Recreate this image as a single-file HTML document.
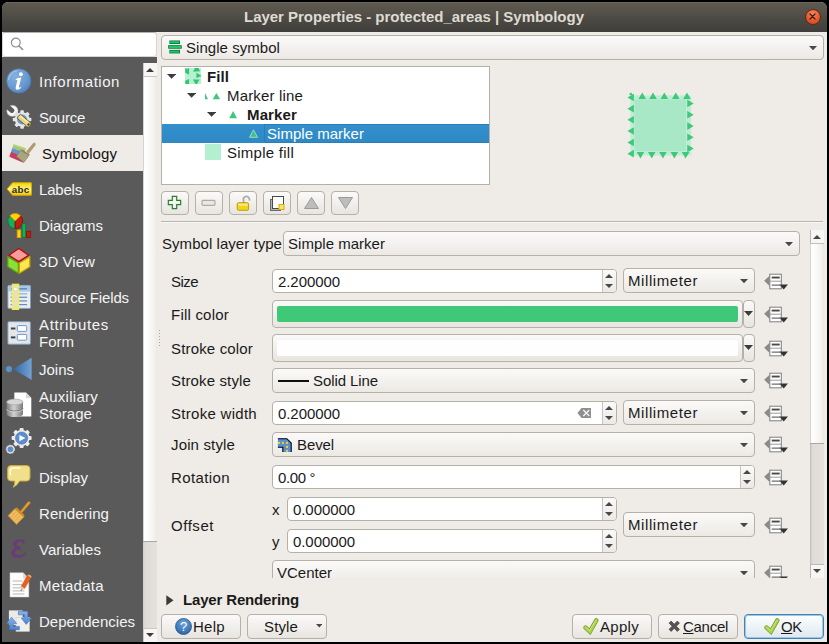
<!DOCTYPE html>
<html><head><meta charset="utf-8"><title>Layer Properties</title>
<style>
*{box-sizing:border-box;margin:0;padding:0}
html,body{width:829px;height:644px;overflow:hidden;background:#000}
body{font-family:"Liberation Sans",sans-serif;font-size:15px;color:#1a1a1a;position:relative}
div,svg{position:absolute}
.tx{white-space:nowrap;line-height:1.15}
#win{left:2px;top:2px;width:825px;height:640px;background:#efebe7;border-radius:7px 7px 0 0;overflow:hidden}
#title{left:2px;top:2px;width:825px;height:30px;background:linear-gradient(#5d594f 0%,#56524a 30%,#4a4843 60%,#403f3b 100%);border-radius:6px 6px 0 0;border-top:1px solid #6a665c}
#close{left:804.6px;top:8.6px;width:16.4px;height:16.4px;border-radius:50%;background:radial-gradient(circle at 50% 30%,#f58a63,#e2542a 60%,#cf4418);border:1px solid #5e2a17}
#search{left:2px;top:32px;width:155px;height:25px;background:#fff;border:1px solid #d9d6d1;border-top-color:#b5b1aa;border-radius:3px}
#side{left:2px;top:57px;width:141px;height:585px;background:#5a5a5a}
#sidetop{left:2px;top:57px;width:155px;height:6px;background:#5a5a5a}
#selrow{left:2px;top:135px;width:141px;height:36px;background:#efebe7}
#sscroll{left:143px;top:63px;width:14px;height:579px;background:#f7f6f4;border-left:1px solid #cfccc7}
#sthumb{left:143px;top:76px;width:14px;height:466px;background:linear-gradient(90deg,#c2bfba 0,#fff 1.5px,#fcfbfa 40%,#f1eeea 92%,#ebe8e4 100%);border-top:1px solid #c9c6c1;border-bottom:1px solid #aaa6a1}
#strack{left:143px;top:542px;width:14px;height:87px;background:linear-gradient(90deg,#cfccc8 0,#dedbd7 2px,#e5e2de 100%);border-bottom:1px solid #cbc8c3}
.combo{background:linear-gradient(#fbfaf9,#ece9e5);border:1px solid #b5b0a8;border-radius:4px}
.edit{background:#fff;border:1px solid #b5b0a8;border-radius:4px}
.spin{background:linear-gradient(#fbfaf9,#ece9e5);border-left:1px solid #c9c5be;border-radius:0 3px 3px 0}
.btn{background:linear-gradient(#fbfaf9,#e8e5e0);border:1px solid #b5b0a8;border-radius:4px}
.da{width:0;height:0;border-left:4px solid transparent;border-right:4px solid transparent;border-top:4.5px solid #3c3c3c}
.ua{width:0;height:0;border-left:4px solid transparent;border-right:4px solid transparent;border-bottom:4.5px solid #3c3c3c}
.sda{width:0;height:0;border-left:3.5px solid transparent;border-right:3.5px solid transparent;border-top:4px solid #3c3c3c}
.sua{width:0;height:0;border-left:3.5px solid transparent;border-right:3.5px solid transparent;border-bottom:4px solid #3c3c3c}
u{text-decoration:underline;text-underline-offset:1px}

</style></head><body>
<div id="win"></div>
<div id="title"></div><div id="close"></div>
<svg style="left:804.3px;top:8.300px" width="17" height="17" viewBox="0 0 17 17"><path d="M6 6 L11 11 M11 6 L6 11" stroke="#3a1a0c" stroke-width="1.2" stroke-linecap="round"/></svg>
<div id="search"></div>
<svg style="left:9px;top:36px" width="16" height="16" viewBox="0 0 16 16"><circle cx="6.8" cy="6.6" r="4.4" fill="none" stroke="#8e8e8e" stroke-width="1.2"/><path d="M10 10 L13.600 13.500" stroke="#8e8e8e" stroke-width="1.600" stroke-linecap="round"/></svg>
<div id="side"></div><div id="sidetop"></div><div id="selrow"></div>
<div id="sscroll"></div><div id="sthumb"></div><div id="strack"></div>
<svg style="left:146px;top:68px" width="8" height="4" viewBox="0 0 8 4"><polygon points="0,4 8,4 4.0,0" fill="#3c3c3c"/></svg>
<svg style="left:146px;top:633px" width="8" height="4" viewBox="0 0 8 4"><polygon points="0,0 8,0 4.0,4" fill="#3c3c3c"/></svg>
<!--ICONS_START-->
<svg style="left:2px;top:63px" width="36" height="36" viewBox="0 0 36 36"><defs><radialGradient id="ig" cx=".35" cy=".3" r=".8"><stop offset="0" stop-color="#86b0de"/><stop offset=".6" stop-color="#6a9bd2"/><stop offset="1" stop-color="#4f80bb"/></radialGradient></defs>
<circle cx="16.8" cy="17.9" r="12.2" fill="url(#ig)" stroke="#4a76ad" stroke-width=".8"/>
<path d="M6.5 17 A10.5 10.5 0 0 1 15 7.600" fill="none" stroke="#a9c9ea" stroke-width="1.2" opacity=".8"/>
<circle cx="18.9" cy="11.2" r="1.9" fill="#fff"/>
<path d="M13.6 16.2 Q16 14.2 19.200 14.400 L17 23.500 Q16.800 25 18.600 24.200 L19.600 23.600 Q18 27 14.800 26.800 Q13.200 26.400 13.700 24.200 L15.300 17.800 Q15.500 16.600 13.600 16.800 Z" fill="#fff"/></svg>
<svg style="left:2px;top:99px" width="36" height="36" viewBox="0 0 36 36"><g transform="translate(20.1,20.5)"><g fill="#e6e6e6">
<circle r="7.3"/>
<rect x="-1.800" y="-9.300" width="3.600" height="3.500" rx=".8"/><rect transform="rotate(45)" x="-1.800" y="-9.300" width="3.600" height="3.500" rx=".8"/><rect transform="rotate(90)" x="-1.800" y="-9.300" width="3.600" height="3.500" rx=".8"/><rect transform="rotate(135)" x="-1.800" y="-9.300" width="3.600" height="3.500" rx=".8"/><rect transform="rotate(180)" x="-1.800" y="-9.300" width="3.600" height="3.500" rx=".8"/><rect transform="rotate(225)" x="-1.800" y="-9.300" width="3.600" height="3.500" rx=".8"/><rect transform="rotate(270)" x="-1.800" y="-9.300" width="3.600" height="3.500" rx=".8"/><rect transform="rotate(315)" x="-1.800" y="-9.300" width="3.600" height="3.500" rx=".8"/></g>
<circle r="5" fill="#6a9bd2"/></g>
<g transform="translate(10.400,11.900) rotate(40)">
<circle r="5.700" fill="#f4f4f4" stroke="#8a8a8a" stroke-width=".4"/>
<path d="M-7 -2.400 H-0.500 A2.400 2.400 0 0 1 -0.500 2.400 H-7 Z" fill="#5a5a5a"/>
<rect x="4" y="-2.100" width="6" height="4.200" fill="#dedede"/>
<rect x="8" y="-2.600" width="15" height="5.200" rx="1.600" fill="#e9d577" stroke="#4a4432" stroke-width=".7"/>
<rect x="9" y="-1.900" width="10.500" height="1.500" fill="#f6ecae"/>
<circle cx="21" cy="0" r="1.200" fill="#3a3a3a"/></g></svg>
<svg style="left:2px;top:135px" width="36" height="36" viewBox="0 0 36 36"><polygon points="11.7,9.2 24,13.2 23,17.5 10.4,13" fill="#a9c86c"/><polygon points="10.4,13 23,17.5 22.1,21.4 9.1,16.5" fill="#5b9ad6"/><polygon points="9.1,16.5 22.1,21.4 20.7,27.4 7.3,21.8" fill="#c4405c"/>
<polygon points="11.7,9.2 24,13.2 23.700,14.400 11.300,10.300" fill="#c2d98e"/>
<path d="M24.600 16.600 L31.400 8.300 Q32.600 7.600 33.200 8.600 Q33.600 9.400 33 10.200 L26.700 18.600 Z" fill="#b39b6b" stroke="#8d7a4e" stroke-width=".4"/>
<path d="M14.400 21.200 L18.600 15.200 L26.900 20.600 L21.700 27.600 Z" fill="#a8a27e" stroke="#7f7856" stroke-width=".6"/>
<path d="M18.600 15.200 L20 14.600 L27.800 19.600 L26.900 20.600 Z" fill="#8f8258"/>
<path d="M16 21 L20 15.900 M18 22.400 L22 17.300 M20 23.800 L24 18.700 M22 25.200 L25.800 20" stroke="#c4c0a2" stroke-width=".5" stroke-dasharray=".8 .8"/></svg>
<svg style="left:2px;top:171px" width="36" height="36" viewBox="0 0 36 36"><defs><linearGradient id="lg" x1="0" y1="0" x2="0" y2="1"><stop offset="0" stop-color="#f3d500"/><stop offset=".5" stop-color="#fff27c"/><stop offset="1" stop-color="#f0c800"/></linearGradient></defs>
<path d="M5 18 L10.600 11.700 H28.900 Q29.500 11.700 29.500 12.300 V23.700 Q29.500 24.300 28.900 24.300 H10.600 Z" fill="url(#lg)" stroke="#d4ac00" stroke-width="1"/>
<text x="18.700" y="21.700" font-family="Liberation Sans" font-weight="bold" font-size="9.800" fill="#2b2b2b" text-anchor="middle" letter-spacing=".3">abc</text></svg>
<svg style="left:2px;top:207px" width="36" height="36" viewBox="0 0 36 36"><g stroke-width=".9">
<path d="M13.200 14 L7.900 8.700 A7.500 7.500 0 0 0 13.200 21.500 Z" fill="#12b05a" stroke="#0a7038"/>
<path d="M13.200 14 L18.500 8.700 A7.500 7.500 0 0 1 13.200 21.500 Z" fill="#c41c10" stroke="#7c0e08"/>
<path d="M13.200 14 L7.900 8.700 A7.500 7.500 0 0 1 18.500 8.700 Z" fill="#ffd30a" stroke="#d89c00"/>
<rect x="15.200" y="23" width="3.600" height="7.600" fill="#ffd30a" stroke="#e0a000"/>
<rect x="20.100" y="16.400" width="3.600" height="14" fill="#12b05a" stroke="#0a7a3a"/>
<rect x="24.600" y="24.300" width="4" height="6.100" fill="#c41c10" stroke="#8a140a"/></g></svg>
<svg style="left:2px;top:243px" width="36" height="36" viewBox="0 0 36 36"><g stroke-width="1.300" stroke-linejoin="round">
<path d="M16.800 5.500 L26.600 12.300 L16.800 18.600 L7 12.300 Z" fill="#f79c9c" stroke="#c00808"/>
<path d="M5.800 13.600 L16.400 20 L16.400 30.200 L5.800 23.800 Z" fill="#8be03a" stroke="#5aa012"/>
<path d="M17.400 20 L27.800 13.600 L27.800 23.800 L17.400 30.200 Z" fill="#fbe84e" stroke="#c8a408"/></g></svg>
<svg style="left:2px;top:279px" width="36" height="36" viewBox="0 0 36 36"><rect x="5.900" y="6.400" width="22.600" height="23" rx="1" fill="#ececec" stroke="#7ba0cc" stroke-width=".9"/>
<rect x="6.300" y="6.800" width="21.800" height="5.800" fill="#a9c8e8"/>
<rect x="9" y="9" width="16" height="1.500" fill="#5a8fcb"/>
<g fill="#4a86c6"><rect x="8.600" y="14.200" width="16.500" height="1.300" opacity=".55"/><rect x="8.600" y="17.700" width="16.500" height="1.100"/><rect x="8.600" y="21.400" width="16.500" height="1.100"/><rect x="8.600" y="25.100" width="16.500" height="1.100"/></g>
<rect x="10.300" y="5.200" width="6.400" height="25.200" fill="#e9e0b4" stroke="#f8f432" stroke-width="1.100"/>
<rect x="12.500" y="9" width="2" height="2" fill="#fff"/></svg>
<svg style="left:2px;top:315px" width="36" height="36" viewBox="0 0 36 36"><rect x="5.900" y="6.700" width="22.500" height="22.500" rx="1" fill="#e6e6e6" stroke="#7ba0cc" stroke-width=".9"/>
<rect x="15.300" y="10.600" width="9.400" height="5.800" rx=".8" fill="#fdfdff" stroke="#5a8fd0" stroke-width=".9"/>
<rect x="15.300" y="19.400" width="9.400" height="5.800" rx=".8" fill="#fdfdff" stroke="#5a8fd0" stroke-width=".9"/>
<rect x="8.900" y="12.500" width="4.500" height="2" fill="#33475c"/><rect x="8.900" y="21.400" width="4.500" height="2" fill="#33475c"/></svg>
<svg style="left:2px;top:351px" width="36" height="36" viewBox="0 0 36 36"><defs><linearGradient id="jg" x1="0" y1="0" x2="1" y2="0"><stop offset="0" stop-color="#2f69a6"/><stop offset="1" stop-color="#74a2d4"/></linearGradient></defs>
<polygon points="11.400,17.900 29.600,6.800 29.600,28.900" fill="url(#jg)"/><circle cx="7" cy="18.100" r="3.100" fill="#5b8fc8"/></svg>
<svg style="left:2px;top:387px" width="36" height="36" viewBox="0 0 36 36"><defs><linearGradient id="cg" x1="0" y1="0" x2="1" y2="0"><stop offset="0" stop-color="#7d7d7d"/><stop offset=".45" stop-color="#d2d2d2"/><stop offset="1" stop-color="#7a7a7a"/></linearGradient></defs>
<path d="M12.300 5.600 H24 L29.300 11 V29.400 H12.300 Z" fill="#fff"/><path d="M24 5.600 V11 H29.300 Z" fill="#d8d8d8"/>
<path d="M4.600 15 V27.200 A8.200 2.900 0 0 0 21 27.200 V15 Z" fill="url(#cg)"/>
<path d="M4.600 21.200 A8.200 2.900 0 0 0 21 21.200" fill="none" stroke="#666" stroke-width=".8"/>
<path d="M4.600 22 A8.200 2.900 0 0 0 21 22" fill="none" stroke="#e8e8e8" stroke-width=".6"/>
<ellipse cx="12.800" cy="15" rx="8.200" ry="2.900" fill="#d6d6d6" stroke="#9a9a9a" stroke-width=".6"/></svg>
<svg style="left:2px;top:423px" width="36" height="36" viewBox="0 0 36 36"><g transform="translate(19.600,15.100)"><g fill="#ececec"><circle r="8"/>
<rect x="-2" y="-10" width="4" height="3.500" rx="1"/><rect transform="rotate(45)" x="-2" y="-10" width="4" height="3.500" rx="1"/><rect transform="rotate(90)" x="-2" y="-10" width="4" height="3.500" rx="1"/><rect transform="rotate(135)" x="-2" y="-10" width="4" height="3.500" rx="1"/><rect transform="rotate(180)" x="-2" y="-10" width="4" height="3.500" rx="1"/><rect transform="rotate(225)" x="-2" y="-10" width="4" height="3.500" rx="1"/><rect transform="rotate(270)" x="-2" y="-10" width="4" height="3.500" rx="1"/><rect transform="rotate(315)" x="-2" y="-10" width="4" height="3.500" rx="1"/></g>
<circle r="6.100" fill="#5b8fcf" stroke="#3f6fa8" stroke-width=".6"/><polygon points="-2.200,-3.200 3.800,0 -2.200,3.200" fill="#fff"/></g>
<g transform="translate(8.400,26.300)"><circle r="4.200" fill="#e4e4e4" stroke="#cfcfcf" stroke-width="1" stroke-dasharray="1.600 1.400"/><circle r="2.900" fill="#5b8fcf"/></g></svg>
<svg style="left:2px;top:459px" width="36" height="36" viewBox="0 0 36 36"><path d="M9 6.600 H24.600 Q28 6.600 28 10 V18.600 Q28 22 24.600 22 H17.600 Q15.500 26.300 11.200 28.300 Q13.300 25 12.800 22 H9 Q5.600 22 5.600 18.600 V10 Q5.600 6.600 9 6.600 Z" fill="#f0e08c" stroke="#c9ae3c" stroke-width="1"/>
<path d="M8.300 16 V11.800 Q8.300 9 11.300 9 H18" fill="none" stroke="#fffbe4" stroke-width="1.300" stroke-linecap="round"/></svg>
<svg style="left:2px;top:495px" width="36" height="36" viewBox="0 0 36 36"><path d="M18.300 16.400 L25.800 7 Q27.200 6 28 7 Q28.600 8 27.600 9 L19.800 17.900 Z" fill="#e3a030" stroke="#c07c14" stroke-width=".5"/>
<path d="M6.100 20.700 L12.900 13.500 L22 22 L14.500 29.500 Z" fill="#eab455" stroke="#c88a20" stroke-width=".7"/>
<path d="M12.900 13.500 L15 12.600 L22.600 20.200 L22 22 Z" fill="#d48c1c"/>
<path d="M8 21 L13 16 M10 23 L15.500 17.500 M12 25 L18 19 M14 27 L20 21" stroke="#f8d898" stroke-width=".7" stroke-dasharray="1 1"/></svg>
<svg style="left:2px;top:531px" width="36" height="36" viewBox="0 0 36 36"><path d="M22.300 11.600 Q22.800 9.600 20.600 8.900 Q17.600 8 14.800 9.100 Q11.300 10.600 11.600 13.600 Q12 16.600 16.400 17 Q9.600 17.600 9.500 22.200 Q9.600 26.500 15.600 26.400 Q20.400 26.300 23.300 23.500 Q24.300 22.300 23.500 21.400 Q20.400 24.800 16.400 24.700 Q12.600 24.500 12.500 21.600 Q12.600 18.300 18.400 17.900 L18.400 16.300 Q14.300 16.200 14.200 13.400 Q14.300 10.200 17.800 10.100 Q20.300 10.100 20.800 12 Q21.600 12.800 22.300 11.600 Z" fill="#6c3a78" stroke="#6c3a78" stroke-width=".7" stroke-linejoin="round"/></svg>
<svg style="left:2px;top:567px" width="36" height="36" viewBox="0 0 36 36"><path d="M8 5.800 H21.200 L26.800 11.400 V30 H8 Z" fill="#fdfdfd" stroke="#d0d0d0" stroke-width=".5"/><path d="M21.200 5.800 V11.400 H26.800 Z" fill="#d6d6d6"/>
<g fill="#c4c4c4"><rect x="10.600" y="13.400" width="10" height="1.200"/><rect x="10.600" y="17" width="11.800" height="1.200"/><rect x="10.600" y="20.200" width="9" height="1.200"/><rect x="10.600" y="23.300" width="11.800" height="1.200"/><rect x="10.600" y="26.400" width="11.800" height="1.200"/></g>
<path d="M25.300 8.600 L29 11 L22.600 21.600 L19.200 19.300 Z" fill="#e8601c" stroke="#b8440c" stroke-width=".4"/><path d="M25.300 8.600 L26.300 7.400 Q28.500 7.300 29.600 9.600 L29 11 Z" fill="#f0a070"/>
<path d="M19.200 19.300 L22.600 21.600 L18.600 24 Z" fill="#d8c8a8"/><path d="M19 22.600 L20 23.200 L18.600 24 Z" fill="#444"/></svg>
<svg style="left:2px;top:603px" width="36" height="36" viewBox="0 0 36 36"><defs><linearGradient id="dg" x1="0" y1="0" x2="0" y2="1"><stop offset="0" stop-color="#8ab4ea"/><stop offset="1" stop-color="#4a82d0"/></linearGradient></defs>
<rect x="6.900" y="7.400" width="13.800" height="14.700" fill="#eaeae6"/>
<rect x="14" y="14.300" width="13.400" height="14" fill="#efefec" stroke="#d2d2cc" stroke-width=".6"/>
<path d="M16.400 8.300 H25.800 V15 H29.600 L24.200 21.400 L19.300 15 H22.300 V11.800 H16.400 Z" fill="url(#dg)" stroke="#3f74c0" stroke-width=".6"/>
<path d="M17.400 26.800 H7.600 V20.600 H4.400 L9.600 14.200 L14.600 20.600 H11.400 V23.400 H17.400 Z" fill="url(#dg)" stroke="#3f74c0" stroke-width=".6"/></svg>
<!--ICONS_END-->
<div class="combo" style="left:161px;top:35px;width:663px;height:25px"></div>
<svg style="left:809.0px;top:46.0px" width="8" height="4.3" viewBox="0 0 8 4.3"><polygon points="0,0 8,0 4.0,4.3" fill="#484848"/></svg>
<svg style="left:168px;top:40px" width="15" height="14" viewBox="0 0 15 14"><rect x="1.4" y="0.5" width="10.6" height="3.5" fill="#0b6b35"/><rect x="2.0999999999999996" y="1.2" width="9.2" height="2.1" fill="#18c862"/><rect x="0.2" y="5.2" width="13.5" height="3.5" fill="#0b6b35"/><rect x="0.8999999999999999" y="5.9" width="12.1" height="2.1" fill="#18c862"/><rect x="1.4" y="9.9" width="10.6" height="3.5" fill="#0b6b35"/><rect x="2.0999999999999996" y="10.6" width="9.2" height="2.1" fill="#18c862"/></svg>
<div style="left:161px;top:66px;width:329px;height:119px;background:#fff;border:1px solid #b5b0a8"></div>
<div style="left:162px;top:124px;width:327px;height:19px;background:linear-gradient(#3290cc,#2e89c4)"></div>
<div style="left:264px;top:124px;width:225px;height:19px;border:1px solid #2a7db9;border-right:0"></div>
<svg style="left:167px;top:74.3px" width="9.2" height="4.8" viewBox="0 0 9.2 4.8"><polygon points="0,0 9.2,0 4.6,4.8" fill="#3c3c3c"/></svg>
<svg style="left:187px;top:93.3px" width="9.2" height="4.8" viewBox="0 0 9.2 4.8"><polygon points="0,0 9.2,0 4.6,4.8" fill="#3c3c3c"/></svg>
<svg style="left:206.7px;top:112.3px" width="9.2" height="4.8" viewBox="0 0 9.2 4.8"><polygon points="0,0 9.2,0 4.6,4.8" fill="#3c3c3c"/></svg>
<svg style="left:185px;top:68px" width="16" height="16" viewBox="0 0 16 16"><rect width="16" height="16" fill="#b6f0d2"/><g fill="#36c56e"><polygon points="0.200,0.200 1.200,0.200 2.200,1.200 3.200,0.200 4.100,0.200 4.100,6.700 0.200,4.800"/><polygon points="8.200,3.800 15,3.300 13.400,0.100 9.800,0.100"/><polygon points="11.400,4.700 16,7.600 16,8.200 11.400,9.900"/><polygon points="0.200,12.800 4.100,11 4.100,16 0.200,16"/><polygon points="8,11.400 14.500,11.400 12,16 10.400,16"/></g></svg>
<svg style="left:205px;top:92px" width="16" height="8" viewBox="0 0 16 8"><g fill="#3ec878"><polygon points="0,0.900 0,7.200 3,7.200"/><polygon points="7.700,7.200 15.100,7.200 11.400,0.900"/></g></svg>
<svg style="left:229px;top:110px" width="9" height="9" viewBox="0 0 9 9"><polygon points="0.200,8.200 8,8.200 4.100,1" fill="#3ec878"/></svg>
<svg style="left:248px;top:128px" width="11" height="11" viewBox="0 0 11 11"><polygon points="1.500,9.300 9.500,9.300 5.500,1.800" fill="#3ec18a" stroke="#9ed4cc" stroke-width="1"/></svg>
<div style="left:205px;top:144px;width:16px;height:16px;background:#b3f0d0"></div>
<svg style="left:615px;top:80px" width="90" height="90" viewBox="0 0 90 90"><rect x="15.37" y="15.37" width="60.79" height="60.09" fill="#bdeed5"/><rect x="19.56" y="19.56" width="51.43" height="51.43" fill="#a9e8c6"/><g fill="#3ec878"><polygon points="23.48,19.01 31.02,19.01 27.25,12.58"/><polygon points="34.24,19.01 41.78,19.01 38.01,12.58"/><polygon points="45.56,19.01 53.10,19.01 49.33,12.58"/><polygon points="57.02,19.01 64.56,19.01 60.79,12.58"/><polygon points="68.19,19.01 75.74,19.01 71.97,12.58"/><polygon points="72.25,19.70 72.25,27.25 78.68,23.48"/><polygon points="72.25,30.88 72.25,38.43 78.68,34.66"/><polygon points="72.25,42.34 72.25,49.89 78.68,46.12"/><polygon points="72.25,53.52 72.25,61.07 78.68,57.29"/><polygon points="72.25,64.70 72.25,72.25 78.68,68.47"/><polygon points="21.66,71.97 29.21,71.97 25.43,78.40"/><polygon points="32.98,71.97 40.53,71.97 36.75,78.40"/><polygon points="44.16,71.97 51.70,71.97 47.93,78.40"/><polygon points="55.62,71.97 63.16,71.97 59.39,78.40"/><polygon points="66.80,71.97 74.34,71.97 70.57,78.40"/><polygon points="18.87,13.69 18.87,21.24 12.44,17.47"/><polygon points="18.87,24.87 18.87,32.42 12.44,28.65"/><polygon points="18.87,36.05 18.87,43.60 12.44,39.83"/><polygon points="18.87,47.23 18.87,54.78 12.44,51.01"/><polygon points="18.87,58.69 18.87,66.24 12.44,62.47"/><polygon points="18.87,69.87 18.87,77.42 12.44,73.64"/><polygon points="13.97,15.09 17.89,15.09 15.93,12.30"/></g></svg>
<div class="btn" style="left:161px;top:191px;width:28px;height:24px"></div>
<div class="btn" style="left:195px;top:191px;width:28px;height:24px"></div>
<div class="btn" style="left:229px;top:191px;width:28px;height:24px"></div>
<div class="btn" style="left:263px;top:191px;width:28px;height:24px"></div>
<div class="btn" style="left:297px;top:191px;width:28px;height:24px"></div>
<div class="btn" style="left:331px;top:191px;width:28px;height:24px"></div>
<svg style="left:167.300px;top:195px" width="15" height="15" viewBox="0 0 17 17"><path d="M6 1.500h5v4.500h4.500v5h-4.500v4.500h-5v-4.500h-4.500v-5h4.500z" fill="#e6f3e2" stroke="#2f7d32" stroke-width="1.350"/><path d="M7.700 3.200h1.600v4.500h4.500v1.600h-4.500v4.500h-1.600v-4.500h-4.500v-1.600h4.500z" fill="#fff" opacity=".7"/></svg>
<svg style="left:201px;top:199px" width="15" height="8" viewBox="0 0 15 8"><rect x="1" y="1.300" width="13" height="5" rx="1" fill="#e9e7e3" stroke="#aeaaa4" stroke-width="1.200"/></svg>
<svg style="left:234px;top:193px" width="19" height="20" viewBox="0 0 19 20"><path d="M9.600 10 V7 a3 3.200 0 0 1 6 -0.600 V8.200" fill="none" stroke="#aaa" stroke-width="1.700" transform="rotate(-8 12 8)"/><rect x="3.200" y="9.700" width="11.400" height="7.600" rx="1.500" fill="#f1d41c" stroke="#b89400" stroke-width=".9"/><rect x="4.200" y="10.600" width="9.400" height="2.200" fill="#f9ea7a"/></svg>
<svg style="left:268px;top:194px" width="19" height="19" viewBox="0 0 19 19"><rect x="2.500" y="5.500" width="10" height="11" fill="#b4b4b0" stroke="#6a6a66"/><rect x="4.500" y="2.500" width="11" height="12" fill="#fdfdfd" stroke="#4a4a4a"/><rect x="11" y="10.500" width="5" height="5" fill="#f7e27a" stroke="#d4b000"/></svg>
<svg style="left:302px;top:196px" width="19" height="14" viewBox="0 0 19 14"><polygon points="2.500,12.500 16.500,12.500 9.500,1.500" fill="#bdbdbd" stroke="#9a9a9a"/></svg>
<svg style="left:336px;top:196px" width="19" height="14" viewBox="0 0 19 14"><polygon points="2.500,1.500 16.500,1.500 9.500,12.500" fill="#bdbdbd" stroke="#9a9a9a"/></svg>
<div style="left:161px;top:221px;width:662px;height:1px;background:#b9b5ae"></div>
<div style="left:161px;top:222px;width:662px;height:1px;background:#faf9f8"></div>
<div style="left:810px;top:230px;width:14px;height:348px;background:#f7f6f4;border-left:1px solid #bcb8b3"></div>
<div style="left:810px;top:243px;width:14px;height:201px;background:linear-gradient(90deg,#c4c1bc 0,#fff 1.5px,#fcfbfa 40%,#f0ede9 92%,#e8e5e1 100%);border-top:1px solid #c4c1bc;border-bottom:1px solid #aaa6a1"></div>
<div style="left:810px;top:444px;width:14px;height:121px;background:linear-gradient(90deg,#bcb8b3 0,#dedbd7 2px,#e5e2de 100%);border-bottom:1px solid #bcb8b3"></div>
<svg style="left:813px;top:235px" width="8" height="4" viewBox="0 0 8 4"><polygon points="0,4 8,4 4.0,0" fill="#484848"/></svg>
<svg style="left:813px;top:569.3px" width="8" height="4" viewBox="0 0 8 4"><polygon points="0,0 8,0 4.0,4" fill="#484848"/></svg>
<div class="combo" style="left:283px;top:231px;width:517px;height:25px"></div>
<svg style="left:785.0px;top:242.0px" width="8" height="4.3" viewBox="0 0 8 4.3"><polygon points="0,0 8,0 4.0,4.3" fill="#484848"/></svg>
<div class="edit" style="left:272px;top:269px;width:345px;height:24px"></div>
<div class="spin" style="left:602px;top:270px;width:14px;height:22px"></div>
<svg style="left:605.0px;top:273.8px" width="8" height="4" viewBox="0 0 8 4"><polygon points="0,4 8,4 4.0,0" fill="#484848"/></svg>
<svg style="left:605.0px;top:284.0px" width="8" height="4" viewBox="0 0 8 4"><polygon points="0,0 8,0 4.0,4" fill="#484848"/></svg>
<div class="combo" style="left:623px;top:268px;width:132px;height:25px"></div>
<svg style="left:740.0px;top:279.0px" width="8" height="4.3" viewBox="0 0 8 4.3"><polygon points="0,0 8,0 4.0,4.3" fill="#484848"/></svg>
<div class="btn" style="left:272px;top:300px;width:471px;height:28px"></div>
<div style="left:277px;top:306px;width:461px;height:16px;border-radius:3px;background:#3ec878;border-radius:2px"></div>
<div class="btn" style="left:743px;top:300px;width:12px;height:28px;border-radius:4px"></div>
<svg style="left:744px;top:311px" width="9" height="5" viewBox="0 0 9 5"><polygon points="0,0 9,0 4.5,5" fill="#3c3c3c"/></svg>
<div class="btn" style="left:272px;top:334px;width:471px;height:28px"></div>
<div style="left:277px;top:340px;width:461px;height:16px;border-radius:3px;background:#fefefe;border-radius:2px"></div>
<div class="btn" style="left:743px;top:334px;width:12px;height:28px;border-radius:4px"></div>
<svg style="left:744px;top:345px" width="9" height="5" viewBox="0 0 9 5"><polygon points="0,0 9,0 4.5,5" fill="#3c3c3c"/></svg>
<div class="combo" style="left:272px;top:368px;width:483px;height:25px"></div>
<svg style="left:740.0px;top:379.0px" width="8" height="4.3" viewBox="0 0 8 4.3"><polygon points="0,0 8,0 4.0,4.3" fill="#484848"/></svg>
<div style="left:278px;top:380px;width:31px;height:1.5px;background:#111"></div>
<div class="edit" style="left:272px;top:401px;width:345px;height:24px"></div>
<div class="spin" style="left:602px;top:402px;width:14px;height:22px"></div>
<svg style="left:605.0px;top:405.8px" width="8" height="4" viewBox="0 0 8 4"><polygon points="0,4 8,4 4.0,0" fill="#484848"/></svg>
<svg style="left:605.0px;top:416.0px" width="8" height="4" viewBox="0 0 8 4"><polygon points="0,0 8,0 4.0,4" fill="#484848"/></svg>
<div class="combo" style="left:623px;top:400px;width:132px;height:25px"></div>
<svg style="left:740.0px;top:411.0px" width="8" height="4.3" viewBox="0 0 8 4.3"><polygon points="0,0 8,0 4.0,4.3" fill="#484848"/></svg>
<svg style="left:577px;top:407px" width="15" height="12" viewBox="0 0 15 12"><path d="M0.500 6 L4.500 1 H14 V11 H4.500 Z" fill="#8f8f8f"/><path d="M6.300 3 L12.300 9 M12.300 3 L6.300 9" stroke="#fff" stroke-width="1.100"/></svg>
<div class="combo" style="left:272px;top:432px;width:483px;height:25px"></div>
<svg style="left:740.0px;top:443.0px" width="8" height="4.3" viewBox="0 0 8 4.3"><polygon points="0,0 8,0 4.0,4.3" fill="#484848"/></svg>
<svg style="left:277px;top:437px" width="16" height="16" viewBox="0 0 16 16"><path d="M0.900 1.600 L9.900 1.600 L14.400 6 L14.400 14.900 L5.600 14.900 L5.600 10.400 L0.900 10.400 Z" fill="#5b8fd0"/><path d="M0.900 1.700 L9.800 1.700 L14.200 6.100 L14.200 14.900 M0.900 10.200 L5.800 10.200 L5.800 14.900" fill="none" stroke="#0a0a0a" stroke-width="1.100"/><g fill="#f5d21c"><rect x="1" y="4.900" width="2" height="2"/><rect x="4.900" y="4.900" width="2" height="2"/><rect x="9" y="4.900" width="2" height="2"/><rect x="9" y="8.900" width="2" height="2"/><rect x="9" y="12.900" width="2" height="1.900"/></g></svg>
<div class="edit" style="left:272px;top:465px;width:483px;height:24px"></div>
<div class="spin" style="left:740px;top:466px;width:14px;height:22px"></div>
<svg style="left:743.0px;top:469.8px" width="8" height="4" viewBox="0 0 8 4"><polygon points="0,4 8,4 4.0,0" fill="#484848"/></svg>
<svg style="left:743.0px;top:480.0px" width="8" height="4" viewBox="0 0 8 4"><polygon points="0,0 8,0 4.0,4" fill="#484848"/></svg>
<div class="edit" style="left:287px;top:497px;width:330px;height:24px"></div>
<div class="spin" style="left:602px;top:498px;width:14px;height:22px"></div>
<svg style="left:605.0px;top:501.8px" width="8" height="4" viewBox="0 0 8 4"><polygon points="0,4 8,4 4.0,0" fill="#484848"/></svg>
<svg style="left:605.0px;top:512.0px" width="8" height="4" viewBox="0 0 8 4"><polygon points="0,0 8,0 4.0,4" fill="#484848"/></svg>
<div class="edit" style="left:287px;top:529px;width:330px;height:24px"></div>
<div class="spin" style="left:602px;top:530px;width:14px;height:22px"></div>
<svg style="left:605.0px;top:533.8px" width="8" height="4" viewBox="0 0 8 4"><polygon points="0,4 8,4 4.0,0" fill="#484848"/></svg>
<svg style="left:605.0px;top:544.0px" width="8" height="4" viewBox="0 0 8 4"><polygon points="0,0 8,0 4.0,4" fill="#484848"/></svg>
<div class="combo" style="left:623px;top:512px;width:132px;height:25px"></div>
<svg style="left:740.0px;top:523.0px" width="8" height="4.3" viewBox="0 0 8 4.3"><polygon points="0,0 8,0 4.0,4.3" fill="#484848"/></svg>
<div style="left:161px;top:555px;width:649px;height:22.800px;overflow:hidden"><div class="combo" style="left:111px;top:5px;width:483px;height:25px"></div><svg style="left:579.0px;top:16.0px" width="8" height="4.3" viewBox="0 0 8 4.3"><polygon points="0,0 8,0 4.0,4.3" fill="#484848"/></svg></div>
<svg style="left:764px;top:272.5px" width="25" height="17" viewBox="0 0 25 17"><polygon points="0.1,7.8 5.6,2.7 5.6,13" fill="#8a8a8a"/><rect x="5.8" y="1.2" width="11.5" height="14.6" fill="#fff" stroke="#7d7d7d"/><line x1="5.8" y1="8.2" x2="17.3" y2="8.2" stroke="#9a9a9a"/><rect x="7.7" y="3.6" width="8" height="1.9" fill="#4a4a4a"/><rect x="7.7" y="11.6" width="8.3" height="1" fill="#4a4a4a"/><polygon points="15.4,11.4 24,11.4 19.7,16.4" fill="#333"/></svg>
<svg style="left:764px;top:305.5px" width="25" height="17" viewBox="0 0 25 17"><polygon points="0.1,7.8 5.6,2.7 5.6,13" fill="#8a8a8a"/><rect x="5.8" y="1.2" width="11.5" height="14.6" fill="#fff" stroke="#7d7d7d"/><line x1="5.8" y1="8.2" x2="17.3" y2="8.2" stroke="#9a9a9a"/><rect x="7.7" y="3.6" width="8" height="1.9" fill="#4a4a4a"/><rect x="7.7" y="11.6" width="8.3" height="1" fill="#4a4a4a"/><polygon points="15.4,11.4 24,11.4 19.7,16.4" fill="#333"/></svg>
<svg style="left:764px;top:339.5px" width="25" height="17" viewBox="0 0 25 17"><polygon points="0.1,7.8 5.6,2.7 5.6,13" fill="#8a8a8a"/><rect x="5.8" y="1.2" width="11.5" height="14.6" fill="#fff" stroke="#7d7d7d"/><line x1="5.8" y1="8.2" x2="17.3" y2="8.2" stroke="#9a9a9a"/><rect x="7.7" y="3.6" width="8" height="1.9" fill="#4a4a4a"/><rect x="7.7" y="11.6" width="8.3" height="1" fill="#4a4a4a"/><polygon points="15.4,11.4 24,11.4 19.7,16.4" fill="#333"/></svg>
<svg style="left:764px;top:371.5px" width="25" height="17" viewBox="0 0 25 17"><polygon points="0.1,7.8 5.6,2.7 5.6,13" fill="#8a8a8a"/><rect x="5.8" y="1.2" width="11.5" height="14.6" fill="#fff" stroke="#7d7d7d"/><line x1="5.8" y1="8.2" x2="17.3" y2="8.2" stroke="#9a9a9a"/><rect x="7.7" y="3.6" width="8" height="1.9" fill="#4a4a4a"/><rect x="7.7" y="11.6" width="8.3" height="1" fill="#4a4a4a"/><polygon points="15.4,11.4 24,11.4 19.7,16.4" fill="#333"/></svg>
<svg style="left:764px;top:404.5px" width="25" height="17" viewBox="0 0 25 17"><polygon points="0.1,7.8 5.6,2.7 5.6,13" fill="#8a8a8a"/><rect x="5.8" y="1.2" width="11.5" height="14.6" fill="#fff" stroke="#7d7d7d"/><line x1="5.8" y1="8.2" x2="17.3" y2="8.2" stroke="#9a9a9a"/><rect x="7.7" y="3.6" width="8" height="1.9" fill="#4a4a4a"/><rect x="7.7" y="11.6" width="8.3" height="1" fill="#4a4a4a"/><polygon points="15.4,11.4 24,11.4 19.7,16.4" fill="#333"/></svg>
<svg style="left:764px;top:435.5px" width="25" height="17" viewBox="0 0 25 17"><polygon points="0.1,7.8 5.6,2.7 5.6,13" fill="#8a8a8a"/><rect x="5.8" y="1.2" width="11.5" height="14.6" fill="#fff" stroke="#7d7d7d"/><line x1="5.8" y1="8.2" x2="17.3" y2="8.2" stroke="#9a9a9a"/><rect x="7.7" y="3.6" width="8" height="1.9" fill="#4a4a4a"/><rect x="7.7" y="11.6" width="8.3" height="1" fill="#4a4a4a"/><polygon points="15.4,11.4 24,11.4 19.7,16.4" fill="#333"/></svg>
<svg style="left:764px;top:468.5px" width="25" height="17" viewBox="0 0 25 17"><polygon points="0.1,7.8 5.6,2.7 5.6,13" fill="#8a8a8a"/><rect x="5.8" y="1.2" width="11.5" height="14.6" fill="#fff" stroke="#7d7d7d"/><line x1="5.8" y1="8.2" x2="17.3" y2="8.2" stroke="#9a9a9a"/><rect x="7.7" y="3.6" width="8" height="1.9" fill="#4a4a4a"/><rect x="7.7" y="11.6" width="8.3" height="1" fill="#4a4a4a"/><polygon points="15.4,11.4 24,11.4 19.7,16.4" fill="#333"/></svg>
<svg style="left:764px;top:516.5px" width="25" height="17" viewBox="0 0 25 17"><polygon points="0.1,7.8 5.6,2.7 5.6,13" fill="#8a8a8a"/><rect x="5.8" y="1.2" width="11.5" height="14.6" fill="#fff" stroke="#7d7d7d"/><line x1="5.8" y1="8.2" x2="17.3" y2="8.2" stroke="#9a9a9a"/><rect x="7.7" y="3.6" width="8" height="1.9" fill="#4a4a4a"/><rect x="7.7" y="11.6" width="8.3" height="1" fill="#4a4a4a"/><polygon points="15.4,11.4 24,11.4 19.7,16.4" fill="#333"/></svg>
<div style="left:764px;top:565px;width:25px;height:12.800px;overflow:hidden"><svg style="left:0;top:0" width="25" height="17" viewBox="0 0 25 17"><polygon points="0.1,7.8 5.6,2.7 5.6,13" fill="#8a8a8a"/><rect x="5.8" y="1.2" width="11.5" height="14.6" fill="#fff" stroke="#7d7d7d"/><line x1="5.8" y1="8.2" x2="17.3" y2="8.2" stroke="#9a9a9a"/><rect x="7.7" y="3.6" width="8" height="1.9" fill="#4a4a4a"/><rect x="7.7" y="11.6" width="8.3" height="1" fill="#4a4a4a"/><polygon points="15.4,11.4 24,11.4 19.7,16.4" fill="#333"/></svg></div>
<svg style="left:165.500px;top:594.500px" width="8" height="11" viewBox="0 0 8 11"><polygon points="0.300,0.300 7.500,5.300 0.300,10.400" fill="#3a3a3a"/></svg>
<div class="btn" style="left:161px;top:614px;width:80px;height:25px"></div>
<div class="btn" style="left:247px;top:614px;width:80px;height:25px"></div>
<div class="btn" style="left:572px;top:614px;width:80px;height:25px"></div>
<div class="btn" style="left:658px;top:614px;width:80px;height:25px"></div>
<div class="btn" style="left:744px;top:614px;width:80px;height:25px;border-color:#3f84ba;box-shadow:inset 0 0 0 1px #9cc8e8;background:linear-gradient(#fdfefe,#dfe8ee)"></div>
<svg style="left:315.800px;top:624.300px" width="6.600" height="3.400" viewBox="0 0 6.600 3.400"><polygon points="0,0 6.600,0 3.300,3.400" fill="#484848"/></svg>
<svg style="left:175px;top:618px" width="17" height="17" viewBox="0 0 17 17"><defs><radialGradient id="hg" cx=".5" cy=".3" r=".7"><stop offset="0" stop-color="#6ea4dc"/><stop offset="1" stop-color="#2c66a8"/></radialGradient></defs><circle cx="8.500" cy="8.500" r="8" fill="url(#hg)" stroke="#24568f" stroke-width=".8"/><text x="8.500" y="13" font-family="Liberation Sans" font-size="13" fill="#fff" text-anchor="middle">?</text></svg>
<svg style="left:583px;top:618px" width="17" height="17" viewBox="0 0 17 17"><path d="M2.600 9.600 L6.900 13.600 L13.300 2.400" fill="none" stroke="#7d9e2a" stroke-width="4.400" stroke-linejoin="miter" stroke-linecap="round"/><path d="M2.600 9.600 L6.900 13.600 L13.300 2.400" fill="none" stroke="#abd250" stroke-width="2.900" stroke-linecap="round"/><path d="M3 9.300 L6.600 12.600 L12.600 2.600" fill="none" stroke="#c9e48a" stroke-width=".9" stroke-linecap="round"/></svg>
<svg style="left:764px;top:618px" width="17" height="17" viewBox="0 0 17 17"><path d="M2.600 9.600 L6.900 13.600 L13.300 2.400" fill="none" stroke="#7d9e2a" stroke-width="4.400" stroke-linejoin="miter" stroke-linecap="round"/><path d="M2.600 9.600 L6.900 13.600 L13.300 2.400" fill="none" stroke="#abd250" stroke-width="2.900" stroke-linecap="round"/><path d="M3 9.300 L6.600 12.600 L12.600 2.600" fill="none" stroke="#c9e48a" stroke-width=".9" stroke-linecap="round"/></svg>
<svg style="left:667px;top:619px" width="14.500" height="14.500" viewBox="0 0 14 14"><path d="M2 4 L4 2 L7 5 L10 2 L12 4 L9 7 L12 10 L10 12 L7 9 L4 12 L2 10 L5 7 Z" fill="#555" stroke="#333" stroke-width=".6"/></svg>
<div style="left:159px;top:330px;width:1px;height:16px;background:repeating-linear-gradient(#a9a6a1 0 1px,transparent 1px 3px)"></div>
<div id="texts">
<div class="tx" id="t0" style="left:244px;top:8.0px;font-size:15px;color:#dfdbd2;font-weight:bold;letter-spacing:-0.022px;">Layer Properties - protected_areas | Symbology</div>
<div class="tx" id="t1" style="left:39px;top:72.5px;font-size:15px;color:#f4f4f4;letter-spacing:0.541px;">Information</div>
<div class="tx" id="t2" style="left:39px;top:108.5px;font-size:15px;color:#f4f4f4;letter-spacing:-0.255px;">Source</div>
<div class="tx" id="t3" style="left:42px;top:144.5px;font-size:15px;color:#111;letter-spacing:0.089px;">Symbology</div>
<div class="tx" id="t4" style="left:39px;top:180.5px;font-size:15px;color:#f4f4f4;letter-spacing:-0.201px;">Labels</div>
<div class="tx" id="t5" style="left:39px;top:216.5px;font-size:15px;color:#f4f4f4;letter-spacing:-0.023px;">Diagrams</div>
<div class="tx" id="t6" style="left:39px;top:252.5px;font-size:15px;color:#f4f4f4;letter-spacing:0.058px;">3D View</div>
<div class="tx" id="t7" style="left:39px;top:288.5px;font-size:15px;color:#f4f4f4;letter-spacing:-0.132px;">Source Fields</div>
<div class="tx" id="t8" style="left:39px;top:316.0px;font-size:15px;color:#f4f4f4;letter-spacing:0.662px;">Attributes</div>
<div class="tx" id="t9" style="left:39px;top:333.0px;font-size:15px;color:#f4f4f4;letter-spacing:0.000px;">Form</div>
<div class="tx" id="t10" style="left:39px;top:360.5px;font-size:15px;color:#f4f4f4;letter-spacing:-0.006px;">Joins</div>
<div class="tx" id="t11" style="left:39px;top:388.0px;font-size:15px;color:#f4f4f4;letter-spacing:0.257px;">Auxiliary</div>
<div class="tx" id="t12" style="left:39px;top:405.0px;font-size:15px;color:#f4f4f4;letter-spacing:0.065px;">Storage</div>
<div class="tx" id="t13" style="left:39px;top:432.5px;font-size:15px;color:#f4f4f4;letter-spacing:0.114px;">Actions</div>
<div class="tx" id="t14" style="left:39px;top:468.5px;font-size:15px;color:#f4f4f4;letter-spacing:-0.027px;">Display</div>
<div class="tx" id="t15" style="left:39px;top:504.5px;font-size:15px;color:#f4f4f4;letter-spacing:0.087px;">Rendering</div>
<div class="tx" id="t16" style="left:39px;top:540.5px;font-size:15px;color:#f4f4f4;letter-spacing:0.064px;">Variables</div>
<div class="tx" id="t17" style="left:39px;top:576.5px;font-size:15px;color:#f4f4f4;letter-spacing:0.307px;">Metadata</div>
<div class="tx" id="t18" style="left:39px;top:612.5px;font-size:15px;color:#f4f4f4;letter-spacing:0.008px;">Dependencies</div>
<div class="tx" id="t19" style="left:186px;top:39.0px;font-size:15px;color:#1a1a1a;letter-spacing:0.047px;">Single symbol</div>
<div class="tx" id="t20" style="left:207px;top:67.5px;font-size:15px;color:#1a1a1a;font-weight:bold;letter-spacing:0.082px;">Fill</div>
<div class="tx" id="t21" style="left:227px;top:86.5px;font-size:15px;color:#1a1a1a;letter-spacing:0.165px;">Marker line</div>
<div class="tx" id="t22" style="left:247px;top:105.5px;font-size:15px;color:#1a1a1a;font-weight:bold;letter-spacing:0.133px;">Marker</div>
<div class="tx" id="t23" style="left:267px;top:124.5px;font-size:15px;color:#fff;letter-spacing:0.024px;">Simple marker</div>
<div class="tx" id="t24" style="left:227px;top:143.5px;font-size:15px;color:#1a1a1a;letter-spacing:0.256px;">Simple fill</div>
<div class="tx" id="t25" style="left:162px;top:234.5px;font-size:15px;color:#1a1a1a;letter-spacing:0.046px;">Symbol layer type</div>
<div class="tx" id="t26" style="left:288px;top:234.5px;font-size:15px;color:#1a1a1a;letter-spacing:0.024px;">Simple marker</div>
<div class="tx" id="t27" style="left:171px;top:272.5px;font-size:15px;color:#1a1a1a;letter-spacing:-0.547px;">Size</div>
<div class="tx" id="t28" style="left:171px;top:305.5px;font-size:15px;color:#1a1a1a;letter-spacing:0.216px;">Fill color</div>
<div class="tx" id="t29" style="left:171px;top:339.5px;font-size:15px;color:#1a1a1a;letter-spacing:0.163px;">Stroke color</div>
<div class="tx" id="t30" style="left:171px;top:372.3px;font-size:15px;color:#1a1a1a;letter-spacing:0.135px;">Stroke style</div>
<div class="tx" id="t31" style="left:171px;top:404.5px;font-size:15px;color:#1a1a1a;letter-spacing:0.288px;">Stroke width</div>
<div class="tx" id="t32" style="left:171px;top:436.1px;font-size:15px;color:#1a1a1a;letter-spacing:0.147px;">Join style</div>
<div class="tx" id="t33" style="left:171px;top:468.5px;font-size:15px;color:#1a1a1a;letter-spacing:0.391px;">Rotation</div>
<div class="tx" id="t34" style="left:171px;top:516.5px;font-size:15px;color:#1a1a1a;letter-spacing:0.542px;">Offset</div>
<div class="tx" id="t35" style="left:278px;top:272.5px;font-size:15px;color:#1a1a1a;letter-spacing:-0.072px;">2.200000</div>
<div class="tx" id="t36" style="left:278px;top:404.5px;font-size:15px;color:#1a1a1a;letter-spacing:-0.072px;">0.200000</div>
<div class="tx" id="t37" style="left:313px;top:371.5px;font-size:15px;color:#1a1a1a;letter-spacing:-0.089px;">Solid Line</div>
<div class="tx" id="t38" style="left:297px;top:435.5px;font-size:15px;color:#1a1a1a;letter-spacing:-0.106px;">Bevel</div>
<div class="tx" id="t39" style="left:278px;top:468.5px;font-size:15px;color:#1a1a1a;letter-spacing:-0.396px;">0.00 °</div>
<div class="tx" id="t40" style="left:272px;top:500.5px;font-size:15px;color:#1a1a1a;letter-spacing:0.500px;">x</div>
<div class="tx" id="t41" style="left:272px;top:532.5px;font-size:15px;color:#1a1a1a;letter-spacing:0.500px;">y</div>
<div class="tx" id="t42" style="left:293px;top:500.5px;font-size:15px;color:#1a1a1a;letter-spacing:-0.072px;">0.000000</div>
<div class="tx" id="t43" style="left:293px;top:532.5px;font-size:15px;color:#1a1a1a;letter-spacing:-0.072px;">0.000000</div>
<div class="tx" id="t44" style="left:277px;top:563.5px;font-size:15px;color:#1a1a1a;letter-spacing:-0.004px;height:14.300px;overflow:hidden;">VCenter</div>
<div class="tx" id="t45" style="left:628px;top:271.8px;font-size:15px;color:#1a1a1a;letter-spacing:0.583px;">Millimeter</div>
<div class="tx" id="t46" style="left:628px;top:403.8px;font-size:15px;color:#1a1a1a;letter-spacing:0.583px;">Millimeter</div>
<div class="tx" id="t47" style="left:628px;top:515.8px;font-size:15px;color:#1a1a1a;letter-spacing:0.583px;">Millimeter</div>
<div class="tx" id="t48" style="left:183px;top:591.0px;font-size:15px;color:#1a1a1a;font-weight:bold;letter-spacing:-0.158px;">Layer Rendering</div>
<div class="tx" id="t49" style="left:193px;top:618.0px;font-size:15px;color:#1a1a1a;letter-spacing:0.285px;">Help</div>
<div class="tx" id="t50" style="left:264px;top:618.0px;font-size:15px;color:#1a1a1a;letter-spacing:0.128px;">Style</div>
<div class="tx" id="t51" style="left:600px;top:618.0px;font-size:15px;color:#1a1a1a;letter-spacing:0.294px;">Apply</div>
<div class="tx" id="t52" style="left:683px;top:618.0px;font-size:15px;color:#1a1a1a;letter-spacing:-0.284px;"><u>C</u>ancel</div>
<div class="tx" id="t53" style="left:781px;top:618.0px;font-size:15px;color:#1a1a1a;letter-spacing:-0.344px;"><u>O</u>K</div>
</div>
</body></html>
